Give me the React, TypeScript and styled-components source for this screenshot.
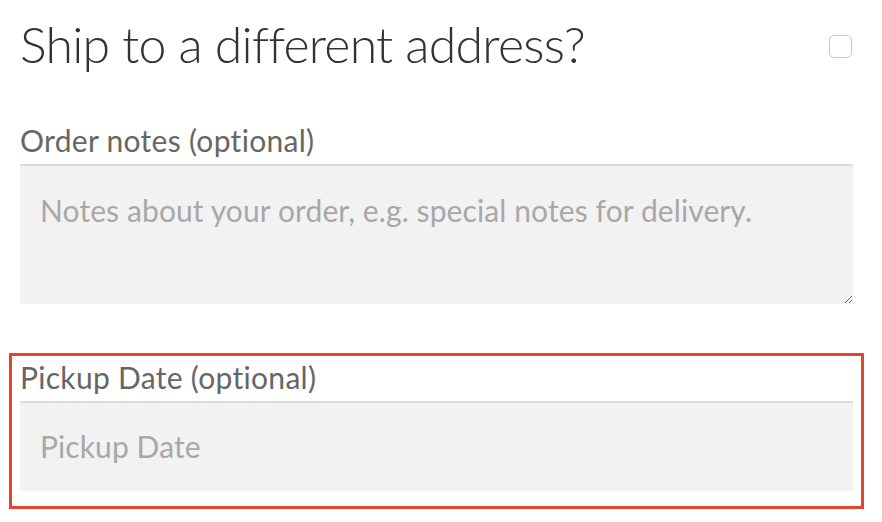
import * as React from 'react';
import styled, { createGlobalStyle } from 'styled-components';

const GlobalStyle = createGlobalStyle`
  html, body {
    margin: 0;
    padding: 0;
    background: #ffffff;
  }
  body {
    font-family: Lato, "Open Sans", "Liberation Sans", sans-serif;
  }
`;

const Page = styled.div`
  width: 882px;
  height: 522px;
  box-sizing: border-box;
  padding: 0 30px 0 9px;
  display: flex;
  flex-direction: column;
  gap: 31px;
  overflow: hidden;
`;

const HeadingRow = styled.div`
  display: flex;
  align-items: flex-start;
  justify-content: space-between;
  height: 116px;
  box-sizing: border-box;
  padding: 14px 0 0 11px;
  margin-bottom: -31px;
`;

const Heading = styled.h3`
  margin: 0;
  font-weight: 300;
  font-size: 50px;
  line-height: 60px;
  color: #333333;
  letter-spacing: -0.75px;
`;

const Checkbox = styled.span`
  width: 23px;
  height: 23px;
  margin-top: 21px;
  box-sizing: border-box;
  border: 1px solid #c8c8c8;
  border-radius: 5px;
  background: #ffffff;
`;

const Field = styled.div<{ highlight?: boolean }>`
  display: flex;
  flex-direction: column;
  border: 3px solid ${({ highlight }) => (highlight ? '#e8442b' : 'transparent')};
  padding: 3px 8px 15px 8px;
  margin-right: -12px;
`;

const Label = styled.label`
  font-size: 30px;
  color: #666666;
  line-height: 36px;
  letter-spacing: 0.3px;
  margin-bottom: 6px;
`;

const TextArea = styled.textarea`
  font-family: inherit;
  font-size: 30px;
  line-height: 36px;
  letter-spacing: 0.1px;
  color: #333;
  background: #f2f2f2;
  border: none;
  box-shadow: inset 0 2px 0 #dcdcdc;
  height: 140px;
  padding: 28px 20px;
  box-sizing: border-box;
  resize: vertical;
  outline: none;
  &::placeholder {
    color: #a8a8a8;
  }
`;

const TextInput = styled.input`
  font-family: inherit;
  font-size: 30px;
  letter-spacing: 0.1px;
  color: #333;
  background: #f2f2f2;
  border: none;
  box-shadow: inset 0 2px 0 #dcdcdc;
  height: 90px;
  padding: 0 20px;
  box-sizing: border-box;
  outline: none;
  &::placeholder {
    color: #a8a8a8;
  }
`;

const App = () => {
  return (
    <Page>
      <GlobalStyle />
      <HeadingRow>
        <Heading>Ship to a different address?</Heading>
        <Checkbox />
      </HeadingRow>
      <Field>
        <Label>Order notes (optional)</Label>
        <TextArea placeholder="Notes about your order, e.g. special notes for delivery." />
      </Field>
      <Field highlight>
        <Label>Pickup Date (optional)</Label>
        <TextInput placeholder="Pickup Date" />
      </Field>
    </Page>
  );
};

export default App;
